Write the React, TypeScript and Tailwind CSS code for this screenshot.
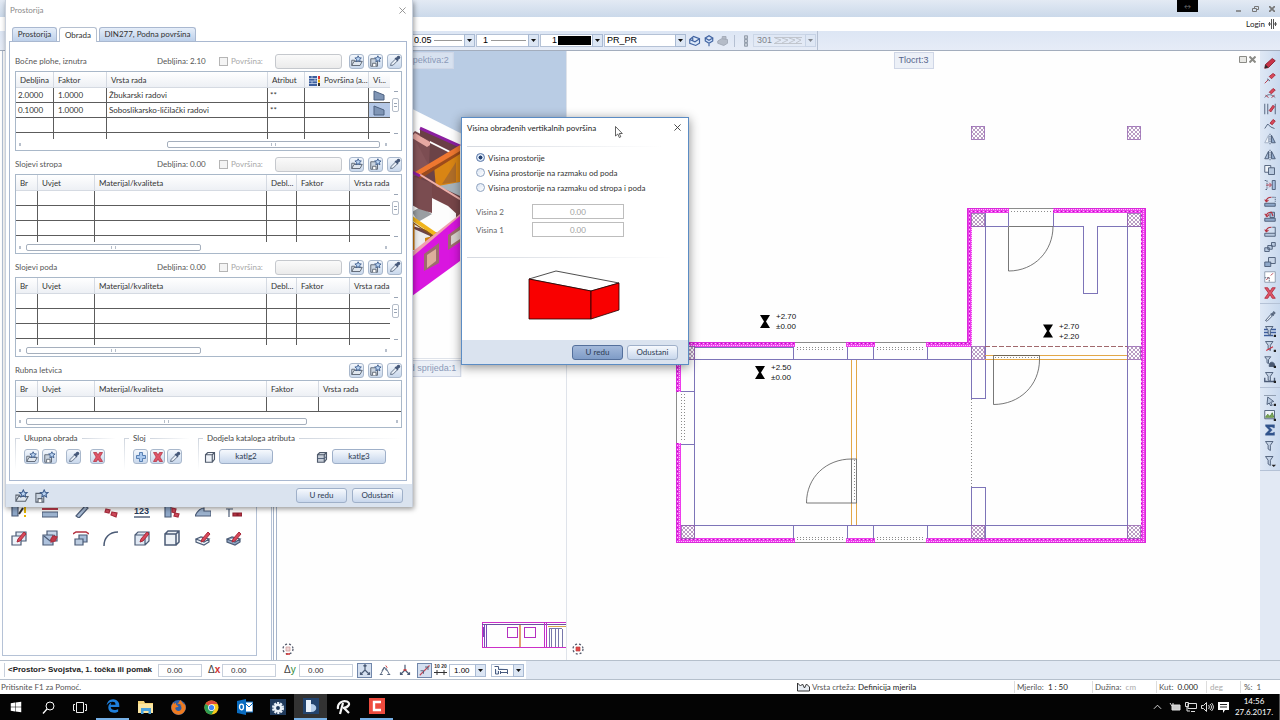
import React from "react";
import { FaWindows, FaFirefoxBrowser } from "react-icons/fa";
import { FaEdgeLegacy } from "react-icons/fa6";

/* ---------- small drawings ---------- */

type IconProps = { className?: string };

const Svg = ({ className = "size-3", children }: { className?: string; children: React.ReactNode }) => (
  <svg viewBox="0 0 16 16" className={className} fill="none" stroke="#4b5b76" strokeWidth="1.2" aria-hidden="true">
    {children}
  </svg>
);

const FolderStar = ({ className }: IconProps) => (
  <Svg className={className}>
    <path d="M1 14V7h4l1 1.500M1 14l3-5.500h11L12 14Z" fill="#dfe6ee" stroke="#59626f" />
    <path d="m9.500 1 1.300 2.700 3 .3-2.200 2 .6 3-2.700-1.500L6.800 9l.6-3-2.200-2 3-.3Z" fill="#b9d3f2" stroke="#3d5c8c" />
  </Svg>
);

const SaveStar = ({ className }: IconProps) => (
  <Svg className={className}>
    <path d="M1 5h9v10H1Z" fill="#c9d3df" stroke="#59626f" />
    <path d="M3.500 15v-4H8v4" fill="#fff" stroke="#59626f" />
    <path d="m10.500 1 1.300 2.700 3 .3-2.200 2 .6 3-2.700-1.500L7.800 9l.6-3-2.200-2 3-.3Z" fill="#b9d3f2" stroke="#3d5c8c" />
  </Svg>
);

const Pipette = ({ className }: IconProps) => (
  <Svg className={className}>
    <path d="m2 14 1-3 6-6 2.500 2.500-6 6Z" fill="#e8eef6" stroke="#5a6a80" />
    <path d="m8 4 4 4M9.500 5 12 2c1-1 3 1 2 2l-3 2.500" fill="#46597a" stroke="#46597a" strokeWidth="1.600" />
  </Svg>
);

const RedX = ({ className }: IconProps) => (
  <Svg className={className}>
    <path d="M2 2h4l2 3.500L10 2h4l-3.500 6 3.500 6h-4l-2-3.500L6 14H2l3.500-6Z" fill="#e0566a" stroke="#b3303f" strokeWidth="1" />
  </Svg>
);

const Plus = ({ className }: IconProps) => (
  <Svg className={className}>
    <path d="M6 2h4v4h4v4h-4v4H6v-4H2V6h4Z" fill="#a9c8ee" stroke="#4d76ad" />
  </Svg>
);

const Cube = ({ className }: IconProps) => (
  <Svg className={className}>
    <path d="M2 5h9v10H2ZM2 5l3-3h9v9l-3 4M11 5l3-3" fill="#eef2f7" stroke="#4f5a6b" strokeWidth="1.500" />
  </Svg>
);

const CubeFilled = ({ className }: IconProps) => (
  <Svg className={className}>
    <path d="M2 5h9v10H2ZM2 5l3-3h9v9l-3 4M11 5l3-3" fill="#c5ccd6" stroke="#4f5a6b" strokeWidth="1.500" />
    <path d="M2 10h9l3-3" />
  </Svg>
);

const Close = ({ className = "size-2" }: IconProps) => (
  <svg viewBox="0 0 8 8" className={className} stroke="currentColor" fill="none" aria-hidden="true">
    <path d="M0.500 0.500l7 7M7.500 0.500l-7 7" />
  </svg>
);

const Shape = ({ className = "h-[11px] w-3" }: IconProps) => (
  <svg viewBox="0 0 12 11" className={className} aria-hidden="true">
    <path d="M1 1l10 4v5H1Z" fill="#7f95b5" stroke="#4d6180" />
  </svg>
);

const Pencil = () => <path d="M7 9l6-7 2 2-6 7-3 1Z" fill="#d9485a" stroke="#a82b3c" strokeWidth="1" />;

/* ---------- palette tools ---------- */

const paletteIcons: { name: string; draw: React.ReactNode }[] = [
  { name: "Promjena zida", draw: <><path d="M1 3h6v11H1Z" fill="#8fa8c9" /><path d="m8 12 4-6" stroke="#333" strokeWidth="2" /><path d="M14 5v6M14 13v2" stroke="#e6b400" strokeWidth="2" /></> },
  { name: "Slojevi", draw: <><path d="M0 7h16" stroke="#c03a4a" strokeWidth="2" /><path d="M0 10h16v5H0Z" fill="#9db3cf" /></> },
  { name: "Kosa linija", draw: <path d="m3 14 9-10 3 2-9 10Z" fill="#a8bbd4" /> },
  { name: "Brisanje", draw: <path d="M3 7l4 1-1 3-4-1ZM9 10l5 1-1 4-5-2Z" fill="#cf4a5b" stroke="#a82b3c" /> },
  { name: "Numeriranje", draw: <><text x="0" y="12" fontSize="9" fill="#2b3d5c" stroke="none" fontFamily="Liberation Sans, sans-serif" fontWeight="bold">123</text><path d="M0 15h16" stroke="#2b3d5c" /></> },
  { name: "Brisanje zida", draw: <><path d="M1 3h6v12H1Z" fill="#8fa8c9" /><path d="M8 6l4 1-1 4-3-1ZM11 11l4 1-1 3-4-1Z" fill="#cf4a5b" stroke="#a82b3c" /></> },
  { name: "Teren", draw: <path d="M0 14c3-6 6-8 9-8v3h7v5Z" fill="#9db3cf" /> },
  { name: "Ograda", draw: <><path d="M0 7h7M3 7v8" /><path d="M7 11h4v3H7ZM12 11h4v3h-4Z" fill="#b3303f" stroke="#8a2030" /></> },
  { name: "Uredi kopiju", draw: <><path d="M5 2h10v9H5Z" fill="#dfe8f3" /><path d="M1 6h9v9H1Z" fill="#eef3f9" /><Pencil /></> },
  { name: "Rastavi", draw: <><path d="M5 1h10v10H5Z" fill="#c9d7ea" /><path d="M1 5h10v10H1Z" fill="#aec2dd" /><path d="m2 6 6 5 5-6" /><path d="M9 9l2-3 4 1-2 4-4 1Z" fill="#c03a4a" stroke="#b3303f" /></> },
  { name: "Pomakni", draw: <><path d="M0 4l3-2h10l3 2" stroke="#b3303f" strokeWidth="1.500" /><path d="M6 5h8v7H6Z" fill="#a9bdd8" /><path d="M2 9h8v6H2Z" fill="#bccce0" /></> },
  { name: "Zaobli", draw: <path d="M1 16C1 8 6 2 15 2" strokeWidth="1.500" /> },
  { name: "Uredi tijelo", draw: <><path d="M1 5h10v10H1ZM1 5l3-3h11v9l-4 4M11 5l4-3" fill="#dfe8f3" /><Pencil /></> },
  { name: "Tijelo", draw: <path d="M1 4h11v11H1ZM1 4l3-3h11v11l-3 3M12 4l3-3" fill="#eef2f7" strokeWidth="1.500" /> },
  { name: "Uredi plohu", draw: <><path d="m1 9 5-2 8 2-5 3ZM1 9v3l8 3 5-3V9" fill="#eef3f9" /><Pencil /></> },
  { name: "Uredi otvor", draw: <><path d="m1 9 5-2 8 2-5 3ZM1 9v3l8 3 5-3V9" fill="#93a9c6" /><Pencil /></> },
];

/* ---------- right-hand tool strip ---------- */

const Funnel = () => <path d="M2 2h10L8.500 7v7l-3-2V7Z" fill="#c5d3e6" />;
const Corner = () => <path d="M13 13h3v3h-3Z" fill="#222" stroke="none" />;

const sideGroups: { name: string; draw: React.ReactNode }[][] = [
  [
    { name: "Olovka", draw: <><path d="M2 10 11 2l4 3-9 9-5 1Z" fill="#c93448" stroke="#8c2030" /><path d="m1 15 1-5 4 4Z" fill="#2b2b2b" stroke="none" /></> },
    { name: "Dio linije", draw: <><path d="m1 15 5-5" stroke="#b3303f" /><path d="m7 6 5-4 3 2-5 5Z" fill="#d9485a" stroke="#a82b3c" /><path d="M4 9l4 3" /></> },
    { name: "Luk", draw: <><path d="M1 14c3-5 9-5 14 0" stroke="#5a6a80" /><path d="m7 7 5-5 3 2-5 5Z" fill="#d9485a" stroke="#a82b3c" /><path d="M2 11l4 3M10 14l4-3" stroke="#b3303f" /></> },
    { name: "Između linija", draw: <><path d="M1 1v14M5 1v14M15 1v14" /><path d="m7 10 5-7 2 2-5 7Z" fill="#d9485a" stroke="#a82b3c" /></> },
    { name: "Polilinija", draw: <><path d="m1 14 4-6 4 4 5 2" /><path d="m8 7 4-5 3 2-4 5Z" fill="#d9485a" stroke="#a82b3c" /></> },
    { name: "Zrcali kopiju", draw: <><path d="M6 3v10H1Z" fill="#eef3f9" stroke="#a0aec2" /><path d="M8 1v14" strokeDasharray="2 1" /><path d="M10 3v10h5Z" fill="#8fa8c9" /></> },
    { name: "Zrcali", draw: <><path d="M6 3v10H1Z" fill="#a9bdd8" /><path d="M8 1v14" strokeDasharray="2 1" /><path d="M10 3v10h5Z" fill="#8fa8c9" /></> },
    { name: "Kopiraj", draw: <><path d="M1 2h8v9H1Z" fill="#eef3f9" /><path d="M6 5h8v9H6Z" fill="#b8c9df" /></> },
    { name: "Pomak", draw: <><path d="M1 2h3v12H1" strokeDasharray="2 1" /><path d="M3 8h6M7 5l3 3-3 3" stroke="#b3303f" /><path d="M11 2h4v12h-4Z" fill="#a9c0e0" /></> },
    { name: "Rotiraj", draw: <><path d="M1 11h14v4H1Z" fill="#8fa8c9" /><path d="M3 9c0-4 3-6 7-6M1 6l2 3 3-2" stroke="#b3303f" strokeWidth="1.500" /><path d="M11 3h4v6" strokeDasharray="2 1" /></> },
    { name: "Rotiraj kopiju", draw: <><path d="M1 11h14v4H1Z" fill="#8fa8c9" /><path d="M8 3h6v7H8Z" fill="#a9bdd8" /><path d="M3 9c0-4 3-6 7-6l2 5M1 5l3 4 3-3" stroke="#b3303f" strokeWidth="1.500" /></> },
    { name: "Zakreni", draw: <><path d="M1 11h14v4H1Z" fill="#b8c9df" /><path d="M3 9c0-4 3-6 7-6M1 6l2 3 3-2" stroke="#b3303f" strokeWidth="1.500" /><path d="M11 3h4v8" /></> },
    { name: "Niz", draw: <><path d="M1 9h6v5H1ZM5 6h6v5H5ZM10 2h5v5h-5Z" fill="#b8c9df" /></> },
    { name: "Umnoži", draw: <><path d="M6 2h9v8H6Z" fill="#c9d6e8" /><path d="M1 8h8v6H1Z" fill="#8fa8c9" /></> },
    { name: "Skaliraj", draw: <><path d="M1 1h14v14H1Z" fill="#fff" stroke="#8b98ab" /><path d="m3 12 4-4M9 6l3-3" stroke="#b3303f" /><path d="M1 9h6v6" strokeDasharray="2 1" /></> },
    { name: "Obriši", draw: <path d="M1 1h4l3 5 3-5h4l-5 7 5 7h-4l-3-5-3 5H1l5-7Z" fill="#e0566a" stroke="#b3303f" /> },
  ],
  [
    { name: "Preuzmi", draw: <><path d="m2 14 7-8 2 2-7 7Z" fill="#e8eef6" /><path d="m9 4 4 4M10 6l3-4 2 2-3 3Z" fill="#6a7688" /></> },
    { name: "Filtar sloja", draw: <><path d="M0 6h16M0 10h16M0 14h12" stroke="#3c5c9c" strokeWidth="2" /><Funnel /><Corner /></> },
    { name: "Filtar linije", draw: <><Funnel /><path d="m3 14 9-5" stroke="#d0303f" strokeWidth="1.500" /><Corner /></> },
    { name: "Filtar traženja", draw: <><path d="M1 1h8L6 5v5L4 9V5Z" fill="#c5d3e6" /><path d="M7 12c0-5 7-5 7 0v2H7Z" fill="#4a5870" /><Corner /></> },
    { name: "Filtar elemenata", draw: <><path d="M1 9v5h13V9" strokeWidth="1.800" /><Funnel /><Corner /></> },
  ],
  [
    { name: "Odabir", draw: <><path d="M0 2h16" stroke="#8b98ab" /><path d="m5 4 8 6-4 1 2 4-2 1-2-4-3 2Z" fill="#b8c9df" /><Corner /></> },
    { name: "Slika", draw: <><path d="M1 2h13v11H1Z" fill="#eef3f9" /><path d="m2 11 3-4 3 3 3-5 2 6Z" fill="#7fae5a" stroke="#5b8540" /><Corner /></> },
    { name: "Zbroj", draw: <path d="M2 1h12v4h-2l-1-1H7l4 4-4 4h5l1-1h1v4H2v-2l5-5-5-5Z" fill="#31548c" stroke="#31548c" strokeWidth="0.500" /> },
    { name: "Filtar", draw: <Funnel /> },
    { name: "Filtar korak", draw: <><Funnel /><path d="M10 13h6l-3 3Z" fill="#222" stroke="none" /></> },
  ],
];

/* ---------- controls ---------- */

const IconButton = ({ label, children }: { label: string; children: React.ReactNode }) => (
  <button
    type="button"
    aria-label={label}
    className="grid size-[15px] shrink-0 place-items-center rounded-[3px] border border-[#a9b8cc] bg-linear-to-b from-[#f3f7fc] to-[#c9d8ec]"
  >
    {children}
  </button>
);

const PushButton = ({ children, strong = false, className = "w-[51px]" }: { children: React.ReactNode; strong?: boolean; className?: string }) => (
  <button
    type="button"
    className={`h-[15px] rounded-[3px] border text-center leading-[13px] text-[#2c3a52] ${className} ${
      strong ? "border-[#54709c] bg-linear-to-b from-[#a3b9da] to-[#7f9cc7]" : "border-[#9fb0c9] bg-linear-to-b from-[#f6f9fd] to-[#c8d7ec]"
    }`}
  >
    {children}
  </button>
);

const Arrow = () => (
  <span className="pointer-events-none absolute inset-y-0 right-0 grid w-[11px] place-items-center border border-[#a9bad3] bg-[#dce6f4]">
    <svg viewBox="0 0 5 3" className="h-[3px] w-[5px]" aria-hidden="true">
      <path d="M0 0h5L2.500 3Z" fill="#111" />
    </svg>
  </span>
);

const Combo = ({ label, value, width, pad = "pl-1", muted = false, children }: { label: string; value: string; width: string; pad?: string; muted?: boolean; children?: React.ReactNode }) => (
  <span className={`relative block h-[13px] shrink-0 ${width} ${muted ? "opacity-45" : ""}`}>
    <select
      aria-label={label}
      disabled={muted}
      className={`block size-full appearance-none border border-[#b5c2d6] leading-[11px] text-black ${muted ? "bg-transparent" : "bg-white"} ${pad}`}
    >
      <option>{value}</option>
    </select>
    {children}
    <Arrow />
  </span>
);

/* ---------- data grids of the room dialog ---------- */

type Column = { title: string; width: string; icon?: boolean };

const layerColumns: Column[] = [
  { title: "Br", width: "w-[22px]" },
  { title: "Uvjet", width: "w-[57px]" },
  { title: "Materijal/kvaliteta", width: "w-[172px]" },
  { title: "Debl...", width: "w-[30px]" },
  { title: "Faktor", width: "w-[53px]" },
  { title: "Vrsta rada", width: "" },
];

const sideColumns: Column[] = [
  { title: "Debljina", width: "w-[38px]" },
  { title: "Faktor", width: "w-[53px]" },
  { title: "Vrsta rada", width: "w-[161px]" },
  { title: "Atribut", width: "w-[37px]" },
  { title: "Površina (a...", width: "w-[64px]", icon: true },
  { title: "Vi...", width: "" },
];

const skirtingColumns: Column[] = [
  { title: "Br", width: "w-[22px]" },
  { title: "Uvjet", width: "w-[57px]" },
  { title: "Materijal/kvaliteta", width: "w-[172px]" },
  { title: "Faktor", width: "w-[52px]" },
  { title: "Vrsta rada", width: "" },
];

const shape = <Shape />;
const sideRows: React.ReactNode[][] = [
  ["2.0000", "1.0000", "Žbukarski radovi", "**", "", shape],
  ["0.1000", "1.0000", "Soboslikarsko-ličilački radovi", "**", "", shape],
  [],
];

const DataGrid = ({ label, columns, rows, thumb, vertical = true, selectedRow = -1 }: { label: string; columns: Column[]; rows: React.ReactNode[][]; thumb: string; vertical?: boolean; selectedRow?: number }) => (
  <div className="border border-[#a9b8c9] bg-white">
    <div className="flex">
      <table aria-label={label} className="min-w-0 flex-1 table-fixed border-separate border-spacing-0 text-[#333]">
        <colgroup>
          {columns.map((c) => (
            <col key={c.title} className={c.width} />
          ))}
        </colgroup>
        <thead>
          <tr className="h-4 bg-linear-to-b from-white to-[#eceff4]">
            {columns.map((c) => (
              <th key={c.title} className="overflow-hidden border-r border-b border-[#d5dae2] p-0 pt-[2px] pl-1 text-left leading-[13px] font-normal whitespace-nowrap last:border-r-0">
                {c.icon && (
                  <svg viewBox="0 0 12 10" className="mr-[3px] inline-block h-[10px] w-3" aria-hidden="true">
                    <path d="M0 0h8v10H0Z" fill="#3d5f9e" />
                    <path d="M0 2.500h8M0 5h8M0 7.500h8M3 0v2.500M6 2.500V5M3 5v2.500" stroke="#dce6f4" strokeWidth="0.700" />
                    <path d="M9 0h2v3H9Z" fill="#d33" />
                    <path d="M9 3.500h2v3H9Z" fill="#e6a800" />
                    <path d="M9 7h2v3H9Z" fill="#333" />
                  </svg>
                )}
                {c.title}
              </th>
            ))}
          </tr>
        </thead>
        <tbody>
          {rows.map((r, i) => (
            <tr key={i} className="h-[15px]">
              {columns.map((c, j) => (
                <td
                  key={c.title}
                  className={`overflow-hidden border-r border-b border-[#5c5c5c] p-0 pt-px leading-[13px] whitespace-nowrap last:border-r-0 ${j === 1 || j === columns.length - 1 ? "pl-1" : "pl-[2px]"} ${
                    i === selectedRow && j === columns.length - 1 ? "bg-[#b5c8e6]" : ""
                  }`}
                >
                  {r[j]}
                </td>
              ))}
            </tr>
          ))}
          {vertical && (
            <tr className="h-[6px]">
              {columns.map((c) => (
                <td key={c.title} className="border-r border-[#5c5c5c] p-0 last:border-r-0" />
              ))}
            </tr>
          )}
        </tbody>
      </table>
      {vertical && (
        <div className="flex w-[11px] flex-col items-center pt-[19px] text-[#9aa5b5]">
          <span className="h-px w-1 bg-[#9aa5b5]" />
          <span className="mt-[6px] grid h-[14px] w-[7px] place-items-center rounded-[2px] border border-[#b5bdc9] bg-white">
            <span className="h-1 w-[3px] border-y border-[#9aa5b5]" />
          </span>
          <span className="mt-auto mb-[5px] h-px w-1 bg-[#9aa5b5]" />
        </div>
      )}
    </div>
    <div className={`flex h-[11px] items-center justify-between px-[3px] ${vertical ? "" : "mt-1"}`}>
      <span className="h-[3px] w-[2px] bg-[#b8c0cc]" />
      <span className="mx-[5px] block flex-1">
        <span className={`grid h-[7px] place-items-center rounded-[2px] border border-[#a5afbd] bg-white ${thumb}`}>
          <span className="h-[3px] w-[5px] border-x border-[#b5bdc9]" />
        </span>
      </span>
      <span className={`h-[3px] w-[2px] bg-[#b8c0cc] ${vertical ? "mr-[11px]" : ""}`} />
    </div>
  </div>
);

const SectionHeader = ({ id, title, thickness }: { id: string; title: string; thickness?: string }) => (
  <div className="flex h-5 items-center text-[#555]">
    <span className="w-[142px]">{title}</span>
    {thickness && (
      <>
        <span className="w-[62px]">Debljina: {thickness}</span>
        <input id={id} type="checkbox" disabled className="size-[9px] appearance-none border border-[#b5b5b5] bg-[#f4f4f4]" />
        <label htmlFor={id} className="ml-[3px] text-[#a8a8a8]">
          Površina:
        </label>
        <input aria-label={`Površina, ${title}`} disabled className="ml-auto h-[15px] w-[67px] rounded-[3px] border border-[#c5c8cd] bg-linear-to-b from-[#fafafa] to-[#ebebeb]" />
      </>
    )}
    <span className={`flex gap-1 ${thickness ? "ml-[7px]" : "ml-auto"}`}>
      <IconButton label={`Učitaj, ${title}`}>
        <FolderStar />
      </IconButton>
      <IconButton label={`Spremi, ${title}`}>
        <SaveStar />
      </IconButton>
      <IconButton label={`Preuzmi, ${title}`}>
        <Pipette />
      </IconButton>
    </span>
  </div>
);

const Group = ({ title, className, children }: { title: string; className: string; children: React.ReactNode }) => (
  <div role="group" aria-label={title} className={`flex ${className}`}>
    <span className="mt-[5px] h-8 w-px shrink-0 bg-linear-to-b from-[#cfd5de] to-transparent" />
    <div className="min-w-0 flex-1">
      <div className="flex h-[11px] items-center gap-1 leading-[11px] text-[#444]">
        <span className="h-px w-[4px] bg-[#cfd5de]" />
        {title}
        <span className="h-px flex-1 bg-linear-to-r from-[#cfd5de] to-transparent" />
      </div>
      <div className="mt-[5px] flex items-center">{children}</div>
    </div>
  </div>
);

const RoomDialog = () => (
  <section aria-label="Prostorija" className="absolute top-0 left-[5px] z-20 flex w-[408px] flex-col border-x border-[#c8d0dc] bg-white shadow-[1px_2px_5px_rgba(0,0,0,0.4)]">
    <header className="flex h-[27px] items-start justify-between px-1 pt-[5px] pr-[6px] leading-[11px] text-[#8a8a8a]">
      <span>Prostorija</span>
      <button type="button" aria-label="Zatvori" className="mt-[2px] text-[#8a8a8a]">
        <Close className="size-[7px]" />
      </button>
    </header>
    <div role="tablist" className="flex h-[14px] items-end gap-[2px] pl-[6px] leading-[13px] text-[#333]">
      <button type="button" role="tab" aria-selected="false" className="w-[45px] rounded-t-[3px] border border-b-0 border-[#a9b8d0] bg-linear-to-b from-[#e6eef9] to-[#bdd0ea]">
        Prostorija
      </button>
      <button type="button" role="tab" aria-selected="true" className="relative z-10 -mb-px h-[15px] w-[38px] rounded-t-[3px] border border-b-0 border-[#b5c0d0] bg-white">
        Obrada
      </button>
      <button type="button" role="tab" aria-selected="false" className="w-[97px] rounded-t-[3px] border border-b-0 border-[#a9b8d0] bg-linear-to-b from-[#e6eef9] to-[#bdd0ea]">
        DIN277, Podna površina
      </button>
    </div>
    <div role="tabpanel" className="mr-[5px] ml-[3px] flex flex-col gap-[3px] border border-[#a9b8d0] pt-[9px] pr-1 pb-[10px] pl-[5px]">
      <div>
        <SectionHeader id="side-area" title="Bočne plohe, iznutra" thickness="2.10" />
        <DataGrid label="Bočne plohe" columns={sideColumns} rows={sideRows} thumb="ml-auto w-[213px]" selectedRow={1} />
      </div>
      <div>
        <SectionHeader id="ceiling-area" title="Slojevi stropa" thickness="0.00" />
        <DataGrid label="Slojevi stropa" columns={layerColumns} rows={[[], [], []]} thumb="w-[175px]" />
      </div>
      <div>
        <SectionHeader id="floor-area" title="Slojevi poda" thickness="0.00" />
        <DataGrid label="Slojevi poda" columns={layerColumns} rows={[[], [], []]} thumb="w-[175px]" />
      </div>
      <div>
        <SectionHeader id="skirting-area" title="Rubna letvica" />
        <DataGrid label="Rubna letvica" columns={skirtingColumns} rows={[[]]} thumb="w-[281px]" vertical={false} />
      </div>
      <div className="mt-[2px] flex gap-2">
        <Group title="Ukupna obrada" className="w-[101px]">
          <span className="ml-2 flex gap-[3px]">
            <IconButton label="Učitaj obradu"><FolderStar /></IconButton>
            <IconButton label="Spremi obradu"><SaveStar /></IconButton>
          </span>
          <span className="ml-[9px] flex gap-[9px]">
            <IconButton label="Preuzmi obradu"><Pipette /></IconButton>
            <IconButton label="Obriši obradu"><RedX /></IconButton>
          </span>
        </Group>
        <Group title="Sloj" className="w-[66px]">
          <span className="ml-2 flex gap-[2px]">
            <IconButton label="Dodaj sloj"><Plus /></IconButton>
            <IconButton label="Obriši sloj"><RedX /></IconButton>
            <IconButton label="Preuzmi sloj"><Pipette /></IconButton>
          </span>
        </Group>
        <Group title="Dodjela kataloga atributa" className="flex-1">
          <Cube className="ml-[5px] size-3" />
          <span className="ml-[3px]"><PushButton className="w-[54px]">katlg2</PushButton></span>
          <CubeFilled className="ml-auto size-3" />
          <span className="mr-4 ml-1"><PushButton className="w-[54px]">katlg3</PushButton></span>
        </Group>
      </div>
    </div>
    <footer className="mt-[3px] flex h-[23px] items-center gap-[5px] bg-[#dae3ef] px-[9px]">
      <button type="button" aria-label="Otvori favorit" className="mr-px"><FolderStar className="size-[14px]" /></button>
      <button type="button" aria-label="Spremi favorit" className="mr-auto"><SaveStar className="size-[14px]" /></button>
      <PushButton>U redu</PushButton>
      <PushButton>Odustani</PushButton>
    </footer>
  </section>
);

const heightModes = ["Visina prostorije", "Visina prostorije na razmaku od poda", "Visina prostorije na razmaku od stropa i poda"];

const HeightDialog = () => (
  <section aria-label="Visina obrađenih vertikalnih površina" className="absolute top-[117px] left-[461px] z-30 flex w-[228px] flex-col border border-[#5b8cc4] bg-white shadow-[0_2px_10px_rgba(0,0,0,0.45)]">
    <header className="flex h-[28px] items-start justify-between pt-1 pr-[7px] pl-[5px] leading-[12px] text-[#222]">
      <span>Visina obrađenih vertikalnih površina</span>
      <button type="button" aria-label="Zatvori" className="mt-[2px] text-[#333]">
        <Close className="size-[7px]" />
      </button>
    </header>
    <div className="ml-[5px] h-px w-[195px] bg-linear-to-r from-[#d5d9e0] to-transparent" />
    <fieldset className="pt-[3px] pl-[14px] text-[#333]">
      {heightModes.map((mode, i) => (
        <label key={mode} className="flex h-[15px] items-center gap-[3px]">
          <input
            type="radio"
            name="height-mode"
            defaultChecked={i === 0}
            className="size-[9px] appearance-none rounded-full border border-[#8fa3c0] bg-linear-to-br from-[#dbe5f3] to-white checked:border-[#5674a6] checked:bg-radial checked:from-[#24406e] checked:from-35% checked:to-[#dbe7f6] checked:to-45%"
          />
          {mode}
        </label>
      ))}
    </fieldset>
    <div className="mt-[9px] flex flex-col gap-[3px] pl-[14px] text-[#666]">
      {["Visina 2", "Visina 1"].map((name) => (
        <label key={name} className="flex h-[15px] items-center">
          <span className="w-14">{name}</span>
          <input disabled defaultValue="0.00" className="h-[15px] w-[92px] border border-[#bdbdbd] bg-white text-center text-[#a0a0a0]" />
        </label>
      ))}
    </div>
    <div className="mt-5 ml-[5px] h-px w-[205px] bg-linear-to-r from-[#d5d9e0] to-transparent" />
    <svg viewBox="0 0 94 51" className="mt-3 ml-[66px] h-[51px] w-[94px]" aria-hidden="true">
      <path d="M1 9 28 1l63 12-28 8Z" fill="#fff" stroke="#222" strokeWidth="0.800" />
      <path d="M1 9l62 12v28H1Z" fill="#f90000" stroke="#200" strokeWidth="0.800" />
      <path d="M63 21l28-8v27l-28 9Z" fill="#f90000" stroke="#200" strokeWidth="0.800" />
    </svg>
    <footer className="mt-[19px] flex h-6 items-center justify-end gap-1 bg-[#dae3ef] pr-[10px]">
      <PushButton strong>U redu</PushButton>
      <PushButton>Odustani</PushButton>
    </footer>
  </section>
);

/* ---------- drawings ---------- */

const PerspectiveDrawing = () => (
  <svg viewBox="278 51 289 307" preserveAspectRatio="xMinYMin slice" className="block size-full" aria-hidden="true">
    <path d="M278 41 567 186v172H278Z" fill="#fefefe" />
    <path d="M413 134 461 158v90l-48 40Z" fill="#6b4347" />
    <path d="M413 134l17 10v22l-17 12Z" fill="#845459" />
    <path d="M413 134l3-3 15 8v5l-1 22Z" fill="#7c4d52" />
    <path d="M413 136l3-3 15 9v3l-3 2-15-9Z" fill="#e6a8a2" />
    <path d="M421 129l40 17v10l-40-20Z" fill="#6a3f45" />
    <path d="M421 128l40 18" stroke="#8b1fa0" strokeWidth="3" />
    <path d="M435 166l26-16v32l-24 6Z" fill="#d98514" />
    <path d="M443 184l14-22v20Z" fill="#b06e28" />
    <path d="M416 172l45-27v6l-42 25Z" fill="#ee7730" />
    <path d="M419 176l42-25v3l-40 25Z" fill="#9c4a1c" />
    <path d="M461 182v14l-22-10Z" fill="#a8b4bc" />
    <path d="M413 206l20-10 24 10v14l-14 14-30-8Z" fill="#fdfdfd" />
    <path d="M413 212l8-5 12 7-14 8Z" fill="#9a9ea2" />
    <path d="M413 176l20 7v30l-13-4-7-4Z" fill="#7a4c50" />
    <path d="M420 176l41 24v17l-12-11-16-8v-16Z" fill="#774649" />
    <path d="M420 174l41 25" stroke="#eeb0aa" strokeWidth="2" />
    <path d="M413 172l8 4" stroke="#8b1fa0" strokeWidth="3" />
    <path d="M413 228l18 8v18l-18 10Z" fill="#ededed" />
    <path d="M426 238l12-3v20l-12 5Z" fill="#cf8410" />
    <path d="M413 218l26 18" stroke="#f0b41c" strokeWidth="4" />
    <path d="M413 222l24 16" stroke="#8d5410" />
    <path d="M414 224v26M433 238v18" stroke="#cf7a10" strokeWidth="3" />
    <path d="M413 252l48-38v4l-48 40Z" fill="#f0a0b0" />
    <path d="M413 257l48-41v45l-48 35Z" fill="#d916df" />
    <path d="M425 254l15-11v20l-15 8Z" fill="#9c6d6c" />
    <path d="M428 255l9-6v12l-9 7Z" fill="#dcae9c" />
    <path d="M449 235l12-9v16l-12 8Z" fill="#9c6d6c" />
    <path d="M452 236l9-6v9l-9 6Z" fill="#d8d2ce" />
  </svg>
);

const CrossMark = ({ filled = false }: { filled?: boolean }) => (
  <svg viewBox="0 0 12 12" className="absolute bottom-[5px] left-[5px] size-3" aria-hidden="true">
    <circle cx="6" cy="6" r="5" fill="none" stroke="#555b6c" strokeWidth="1.300" strokeDasharray="2 2" />
    <path d="M4 4h4v4H4Z" fill={filled ? "#e04848" : "#efd5d5"} stroke={filled ? "#c04040" : "#cc9a9a"} strokeWidth="0.700" />
    {!filled && <path d="M4 11h4" stroke="#d03030" strokeWidth="1.500" />}
  </svg>
);

const columns: [number, number][] = [
  [971, 126],
  [1127, 126],
  [971, 213],
  [1127, 213],
  [681, 346],
  [971, 346],
  [1127, 346],
  [681, 525],
  [971, 525],
  [1127, 525],
];

const Hourglass = ({ x, y }: { x: number; y: number }) => <path d={`M${x - 5} ${y - 6.5}h10l-4 6.500 4 6.500h-10l4-6.500Z`} fill="#000" />;

const Plan = () => (
  <svg viewBox="567 51 693 609" preserveAspectRatio="xMinYMin slice" className="block size-full" fontFamily="Liberation Sans, Arial, sans-serif" role="img" aria-label="Tlocrt">
    <defs>
      <pattern id="wall" width="4" height="4" patternUnits="userSpaceOnUse">
        <path d="M0 0h4v4H0Z" fill="#ee3cec" />
        <path d="M1 1h1v1H1ZM3 3h1v1H3ZM3 1h1v1h-1Z" fill="#fbc8fb" />
        <path d="M1 3h1v1H1Z" fill="#b81cc0" />
      </pattern>
      <pattern id="hatch" width="4" height="4" patternUnits="userSpaceOnUse">
        <path d="M0 0l4 4M4 0 0 4" stroke="#8a5a9a" strokeWidth="0.600" />
      </pattern>
    </defs>
    <g fill="url(#wall)">
      <path d="M676 342h119v5H681v45h-5ZM846 342h29v5h-29ZM926 342h41V208h42v5h-37v134h-46ZM1053 208h93v335H926v-5h215V213h-88ZM676 443h5v95h114v5H676ZM846 538h29v5h-29Z" />
    </g>
    <g fill="none" stroke="#d92ad9" strokeWidth="1">
      <path d="M795 342.500H676.500V392M846 342.500h29M926 342.500h41.500V208.500h41.500M1053 208.500h92.500v334M1146 542.500H926M875 542.500h-29M795 542.500H676.500V443" />
    </g>
    <g fill="none" stroke="#7d74b8" strokeWidth="1" shapeRendering="crispEdges">
      <path d="M681 359.500h291M694.500 346v193M681 525.500h447M793.500 347v12M847.500 347v12M873.500 347v12M927.500 347v12M793.500 525v14M847.500 525v14M873.500 525v14M927.500 525v14M681 391.500h13M681 444.500h13" />
      <path d="M971.500 346v52.500h13.500V346M971.500 525v-37.500H985V539M985.500 213v133M1127.500 213v326M972 226.500h36M1053 226.500h30.500v66.500h13.500v-66.500h44M1008.500 213v13M1053.500 213v13M694 347.500h99" />
    </g>
    <g fill="none" stroke="#8b8b8b" strokeWidth="1" shapeRendering="crispEdges">
      <path d="M795 342.500h51M875 342.500h51M795 542.500h51M875 542.500h51M676.500 392v51M1009 208.500h44" />
      <path strokeDasharray="1 2" d="M797 347.500h48M797 349.500h48M877 347.500h48M877 349.500h48M797 537.500h48M797 539.500h48M877 537.500h48M877 539.500h48M681.500 394v48M684.500 394v48M1011 211.500h40M971.500 399v88M995 357.500h43M854.500 460v42" />
    </g>
    <g fill="none" stroke="#e2a748" strokeWidth="1" shapeRendering="crispEdges">
      <path d="M851.500 360v99M856.500 360v99M851.500 503v22M856.500 503v22M985 355.500h142M985 359.500h142" />
    </g>
    <path d="M985 346.500h142" stroke="#a0686c" strokeDasharray="5 2" />
    <g fill="none" stroke="#555" strokeWidth="0.800">
      <path d="M851.500 459v44h-45c0-26 20-44 45-44h5v44h-5M1008.500 226.500v44.500c26 0 44.500-20 44.500-44.500ZM993.500 355.500v49c26 0 46-19 46-45v-4Z" />
    </g>
    {columns.map(([x, y]) => (
      <rect key={`${x}-${y}`} x={x + 0.5} y={y + 0.5} width="13" height="13" fill="url(#hatch)" stroke="#9465b0" strokeWidth="0.800" />
    ))}
    <Hourglass x={765} y={321.5} />
    <Hourglass x={760} y={372.5} />
    <Hourglass x={1048} y={331} />
    <g fontSize="8" fill="#111">
      <text x="776" y="319">+2.70</text>
      <text x="776" y="329">±0.00</text>
      <text x="771" y="370">+2.50</text>
      <text x="771" y="380">±0.00</text>
      <text x="1059" y="329">+2.70</text>
      <text x="1059" y="339">+2.20</text>
    </g>
  </svg>
);

const Elevation = () => (
  <svg viewBox="0 0 84 26" className="absolute right-0 bottom-3 h-[26px] w-[84px]" fill="none" aria-hidden="true" shapeRendering="crispEdges">
    <path d="M84 .5H.5v24.500H84" stroke="#cc2fc8" />
    <path d="M0 2.500h84" stroke="#6a50a0" />
    <path d="M2.500 3v22M1.500 5v10M4.500 3v22" stroke="#7d4ab8" />
    <path d="M25.500 5.500h10v10h-10ZM42.500 5.500h11v10h-11Z" stroke="#b52fc0" />
    <path d="M38 2.500v22" stroke="#e0a070" strokeWidth="2" />
    <path d="M62.500 0v25M64.500 0v25" stroke="#c02fc8" />
    <path d="M66 4.500h18" stroke="#d8a850" />
    <path d="M67.500 7v18M69.500 7v18M73.500 7v18M76.500 7v18M80.500 7v18M67 6.500h13" stroke="#7777aa" />
  </svg>
);

const ViewLabel = ({ children }: { children: React.ReactNode }) => (
  <span className="absolute top-px left-1/2 z-10 -translate-x-1/2 border border-[#cfd6e6] bg-[#e4e9f4]/70 px-1 font-['Liberation_Sans',Arial,sans-serif] text-[9px] leading-[15px] whitespace-nowrap text-[#8a99b8]">{children}</span>
);

/* ---------- bars ---------- */

const Field = ({ label, className }: { label: string; className: string }) => (
  <input aria-label={label} defaultValue="0.00" className={`h-[13px] border border-[#c8d0dc] bg-white pl-2 text-[#333] ${className}`} />
);

const ModeButton = ({ label, active = false, children }: { label: string; active?: boolean; children: React.ReactNode }) => (
  <button type="button" aria-label={label} className={`grid size-[15px] place-items-center ${active ? "border border-[#7187ab] bg-[#d5e0f0]" : ""}`}>
    <Svg>{children}</Svg>
  </button>
);

const CommandBar = () => (
  <div className="flex h-5 shrink-0 items-center border-y border-[#b5bfcc] bg-[#e2e9f4] font-['Liberation_Sans',Arial,sans-serif] text-[8px] whitespace-nowrap">
    <div className="flex h-full items-center bg-white pr-[2px] pl-1">
      <span className="h-[14px] w-px bg-[#c8d0dc]" />
      <label htmlFor="offset" className="w-[153px] pl-[3px] font-bold text-[#222]">&lt;Prostor&gt; Svojstva, 1. točka ili pomak</label>
      <input id="offset" defaultValue="0.00" className="h-[13px] w-[44px] border border-[#c8d0dc] bg-white pl-2 text-[#333]" />
      <span className="ml-[6px] w-[14px] text-[10px] text-[#444]">Δ<b className="text-[#d03030]">x</b></span>
      <Field label="Δx" className="w-[54px]" />
      <span className="ml-2 w-[15px] text-[10px] text-[#444]">Δ<span className="text-[#2e8b3a]">y</span></span>
      <Field label="Δy" className="w-[54px]" />
      <div className="ml-1 flex gap-[5px]">
        <ModeButton label="Globalna točka" active><path d="M8 1v7M8 8l-6 6M8 8l6 6M6 3l2-2 2 2M2 11v3h3M14 11v3h-3" strokeWidth="1.600" /></ModeButton>
        <ModeButton label="Kut"><path d="M2 14l5-9M9 5l5 9M4 9l3-5 3 5M1 14h4M11 14h4" /><path d="M9 2l2 3" stroke="#d03030" /></ModeButton>
        <ModeButton label="Razmak"><path d="M8 1v7M8 8l-6 6M8 8l6 6M2 11v3h3M14 11v3h-3" strokeWidth="1.600" /><path d="M6 8h4" stroke="#d03030" strokeWidth="2" /></ModeButton>
        <ModeButton label="Lovljenje" active><path d="M1 15 14 2" stroke="#c04858" strokeWidth="1.500" /><path d="M2 9h4v4M8 4h4v4" /></ModeButton>
      </div>
      <span className="ml-[2px] flex flex-col items-center text-[5px] leading-[5px] font-bold text-[#333]">
        10 20
        <svg viewBox="0 0 13 7" className="h-[7px] w-[13px]" stroke="#333" fill="none" aria-hidden="true"><path d="M0 3.500h13M3 1v5M10 1v5" /></svg>
      </span>
      <span className="ml-[2px]"><Combo label="Korak" value="1.00" width="w-[37px]" /></span>
      <span className="ml-[5px]">
        <Combo label="Kotiranje" value="" width="w-[33px]">
          <svg viewBox="0 0 14 9" className="pointer-events-none absolute top-[2px] left-[3px] h-[9px] w-[14px]" fill="#dbe5f2" stroke="#4a5c80" aria-hidden="true"><path d="M.5.5h4v3h9M1.500 3v5h3V5M6.500 6.500h7M6.500 5v3M13.500 3.500V8" /></svg>
        </Combo>
      </span>
    </div>
  </div>
);

const StatusBar = () => (
  <div className="flex h-[14px] shrink-0 items-center bg-white text-[#555] whitespace-nowrap">
    <span className="flex-1 pl-px">Pritisnite F1 za Pomoć.</span>
    <svg viewBox="0 0 13 10" className="h-[10px] w-[13px]" fill="#e8edf3" stroke="#333" aria-hidden="true"><path d="M.5 9V1l3 3 2-2 2 4 2-4 3 3v4Z" /></svg>
    <span className="w-12 pl-[2px]">Vrsta crteža:</span>
    <span className="w-[156px] text-[#222]">Definicija mjerila</span>
    <span className="w-[78px] border-l border-[#ddd] pl-[2px]">Mjerilo:&nbsp; <span className="text-[#222]">1 : 50</span></span>
    <span className="w-[64px] border-l border-[#ddd] pl-[2px]">Dužina:&nbsp; <span className="text-[#aaa]">cm</span></span>
    <span className="w-[50px] border-l border-[#ddd] pl-[2px]">Kut:&nbsp; <span className="text-[#222]">0.000</span></span>
    <span className="w-[34px] border-l border-[#ddd] pl-[3px] text-[#aaa]">deg</span>
    <span className="w-10 border-l border-[#ddd] pl-[3px]">%:&nbsp; 1</span>
  </div>
);

const Task = ({ label, running = false, active = false, children }: { label: string; running?: boolean; active?: boolean; children: React.ReactNode }) => (
  <button type="button" aria-label={label} className={`grid h-full w-[33px] place-items-center ${active ? "bg-[#323232]" : ""} ${running ? "border-b-2 border-[#76b0e6]" : ""}`}>
    {children}
  </button>
);

const Taskbar = () => (
  <footer className="flex h-[26px] shrink-0 items-center bg-[#040404] text-white">
    <button type="button" aria-label="Start" className="grid w-8 place-items-center"><FaWindows className="size-3" /></button>
    <button type="button" aria-label="Traži" className="grid w-8 place-items-center">
      <svg viewBox="0 0 13 13" className="size-[13px]" fill="none" stroke="#fff" aria-hidden="true"><circle cx="8" cy="5" r="4" /><path d="m5 8-4 4.500" strokeWidth="1.300" /></svg>
    </button>
    <button type="button" aria-label="Prikaz zadataka" className="grid w-8 place-items-center">
      <svg viewBox="0 0 14 11" className="h-[11px] w-[14px]" fill="none" stroke="#eee" aria-hidden="true"><path d="M3.500.5h7v10h-7ZM2 2.500H.5v6H2M12 2.500h1.500v6H12" /></svg>
    </button>
    <Task label="Edge" running><FaEdgeLegacy className="size-[14px] text-[#1e7fdc]" /></Task>
    <Task label="Eksplorer">
      <svg viewBox="0 0 16 14" className="h-[14px] w-4" aria-hidden="true"><path d="M0 1h6l1 2h8v10H0Z" fill="#f5d478" /><path d="M0 4h15v9H0Z" fill="#fbe6a2" /><path d="M3 8h10v6h-2.500v-3h-5v3H3Z" fill="#4aa3df" /></svg>
    </Task>
    <Task label="Firefox">
      <span className="grid size-[15px] place-items-center rounded-full bg-[#2b5ea8]"><FaFirefoxBrowser className="size-[15px] text-[#ee7b20]" /></span>
    </Task>
    <Task label="Chrome">
      <svg viewBox="0 0 16 16" className="size-[15px]" aria-hidden="true"><circle cx="8" cy="8" r="7.500" fill="#f7c91b" /><path d="M8 8 1.500 4.250A7.500 7.500 0 0 1 14.500 4.250H8Z" fill="#de4a3a" /><path d="M8 8 1.500 4.250A7.500 7.500 0 0 0 8 15.500l3.200-5.600Z" fill="#2f9e55" /><circle cx="8" cy="8" r="3.600" fill="#fff" /><circle cx="8" cy="8" r="2.800" fill="#4285f4" /></svg>
    </Task>
    <Task label="Outlook">
      <svg viewBox="0 0 16 16" className="size-4" aria-hidden="true"><path d="M8 3h8v10H8Z" fill="#fff" stroke="#0a6cc0" /><path d="m9 5 3 3 4-4" fill="none" stroke="#0a6cc0" /><path d="M0 2l9-2v16l-9-2Z" fill="#0a6cc0" /><ellipse cx="4.500" cy="8" rx="2" ry="2.800" fill="none" stroke="#fff" strokeWidth="1.300" /></svg>
    </Task>
    <Task label="Postavke programa">
      <svg viewBox="0 0 16 16" className="size-4" aria-hidden="true"><path d="M0 0h16v16H0Z" fill="#1f3a5c" /><circle cx="8" cy="9" r="4.800" fill="none" stroke="#e8f0f8" strokeWidth="2.500" strokeDasharray="2 1.020" /><circle cx="8" cy="9" r="3.200" fill="none" stroke="#e8f0f8" strokeWidth="2.500" /></svg>
    </Task>
    <Task label="CAD" running active>
      <svg viewBox="0 0 16 16" className="size-4" aria-hidden="true"><path d="M0 0h16v16H0Z" fill="#23446e" /><path d="M3 2h5v12H3Z" fill="#e8f1fb" /><path d="M8 6c7 0 7 8 0 8Z" fill="#b4cdea" /></svg>
    </Task>
    <Task label="Rhino">
      <svg viewBox="0 0 16 16" className="size-4" fill="none" stroke="#f5f5f5" strokeWidth="2.200" aria-hidden="true"><path d="M2 10C1 4 7 1 11 2.500s2 6-4 6.500M7 4 4 15M8 9l5 5" /></svg>
    </Task>
    <Task label="Camtasia" running>
      <svg viewBox="0 0 16 16" className="size-4" aria-hidden="true"><path d="M0 0h16v16H0Z" fill="#ee4b3e" /><path d="M12 4H5v8h7" fill="none" stroke="#fff" strokeWidth="2.400" /></svg>
    </Task>
    <div className="ml-auto flex items-center gap-1">
      <svg viewBox="0 0 10 6" className="mr-[3px] h-[6px] w-[9px]" fill="none" stroke="#eee" aria-hidden="true"><path d="m1 5 4-4 4 4" /></svg>
      <svg viewBox="0 0 12 10" className="h-[10px] w-3" fill="#ccc" stroke="#ddd" aria-hidden="true"><path d="M3 3h8v5H3ZM1 1l2 3M4 1v2" /></svg>
      <svg viewBox="0 0 12 10" className="h-[10px] w-3" fill="none" stroke="#ddd" aria-hidden="true"><path d="M3 1.500h8.500v5H3ZM.5.5h3v4h-3ZM6 9.500h4M2 5v4h3" /></svg>
      <svg viewBox="0 0 13 10" className="h-[10px] w-[13px]" fill="none" stroke="#ddd" aria-hidden="true"><path d="M.5 3.500h2l3-3v9l-3-3h-2ZM7.500 3c1 1 1 3 0 4M9 2c2 2 2 4 0 6M10.500 1c2.500 3 2.500 5 0 8" /></svg>
      <svg viewBox="0 0 11 11" className="size-[11px]" aria-hidden="true"><path d="M0 0h11v8H7l-2 3V8H0Z" fill="#fff" /><path d="M2 2.500h7M2 5h7" stroke="#222" /></svg>
    </div>
    <div className="w-[50px] text-center leading-[11px]">
      <div>14:56</div>
      <div>27.6.2017.</div>
    </div>
    <span className="h-full w-px bg-[#555]" />
  </footer>
);

const AttributeBar = () => (
  <div className="flex h-5 shrink-0 items-center gap-px border-b border-[#a3adbd] bg-linear-to-b from-[#dde6f4] to-[#e6ecf7] pl-[384px] font-['Liberation_Sans',Arial,sans-serif] text-[9px]">
    <Combo label="Debljina linije" value="0.05" width="w-[91px]" pad="pl-[29px]">
      <span className="pointer-events-none absolute top-[6px] right-[13px] h-px w-[28px] bg-[#999]" />
    </Combo>
    <Combo label="Tip linije" value="1" width="w-[63px]" pad="pl-[6px]">
      <span className="pointer-events-none absolute top-[6px] right-[13px] h-px w-[35px] bg-[#999]" />
    </Combo>
    <Combo label="Boja linije" value="1" width="w-[63px]" pad="pl-[11px]">
      <span className="pointer-events-none absolute top-[2px] right-[12px] h-[9px] w-[33px] bg-black" />
    </Combo>
    <Combo label="Sloj" value="PR_PR" width="w-[82px]" pad="pl-[2px]" />
    <div className="ml-[2px] flex gap-[2px] border-r border-[#b5c0d2] pr-[5px]">
      <Svg><path d="M1 6l5-4 8 3v6l-5 3-8-3ZM1 6l7 3 6-4M5 7V4" fill="#dbe8fa" stroke="#3f62a0" strokeWidth="1.500" /></Svg>
      <Svg><path d="M3 4l5-3 5 3-5 3ZM3 4v4l5 3 5-3V4M8 11v4" fill="#cfe0fa" stroke="#3f62a0" strokeWidth="1.500" /></Svg>
      <Svg><path d="M1 8l5-3 8 1v5l-5 3-8-3ZM7 5V2h5v4" fill="#b5bcc8" stroke="#a0a8b5" /></Svg>
    </div>
    <Svg className="ml-1 size-3"><path d="M6 1h4v4H6ZM6 6h4v4H6ZM6 11h4v4H6Z" fill="#c5ccd6" stroke="#8d97a6" /></Svg>
    <Combo label="Uzorak" value="301" width="w-[63px]" pad="pl-[3px]" muted>
      <svg viewBox="0 0 28 7" className="pointer-events-none absolute top-[3px] left-[21px] h-[7px] w-[28px]" fill="none" stroke="#888" aria-hidden="true"><path d="M0 .5h28M0 6.500h28M1 1l6 2-6 3M8 1l6 2-6 3M15 1l6 2-6 3M22 1l5 2-5 3" strokeWidth="0.800" /></svg>
    </Combo>
    <span className="h-full w-px bg-[#b5c0d2]" />
  </div>
);

const SideTools = () => (
  <nav aria-label="Alati" className="flex w-5 shrink-0 flex-col bg-[#e2e9f4]">
    <div className="border-b border-[#b5c2d6] bg-linear-to-r from-[#dfe8f5] to-[#c9d9ee] pt-1 pb-[2px]">
      {sideGroups.map((tools, i) => (
        <div key={i} className={i === 0 ? "" : "mt-[3px] border-t border-[#b5c2d6] pt-[4px]"}>
          {tools.map((t, j) => (
            <button key={t.name} type="button" aria-label={t.name} className={`grid w-full place-items-center ${j % 3 === 2 ? "h-4" : "h-[15px]"}`}>
              <Svg className="size-3">{t.draw}</Svg>
            </button>
          ))}
        </div>
      ))}
    </div>
  </nav>
);

export default function App() {
  return (
    <div className="relative flex h-screen min-h-[560px] flex-col overflow-hidden bg-white font-[Lato,'Open_Sans',sans-serif] text-[8px] leading-[12px]">
      <div className="flex h-[17px] shrink-0 items-start justify-end bg-linear-to-b from-[#e3eaf4] to-[#cbd9ea] text-[#777]">
        <span className="mr-[38px] grid h-3 w-[21px] place-items-center bg-black text-[7px] leading-none text-[#777]">↔</span>
        <div className="flex h-full items-center gap-[10px] pr-[5px]">
          <button type="button" aria-label="Smanji"><svg viewBox="0 0 6 6" className="size-[6px]" aria-hidden="true"><path d="M0 5h5" stroke="#777" strokeWidth="1.500" /></svg></button>
          <button type="button" aria-label="Vrati"><svg viewBox="0 0 7 6" className="h-[6px] w-[7px]" fill="none" stroke="#777" aria-hidden="true"><path d="M.5 2.500h4v3h-4ZM2.500 2V.5h4v3H5" /></svg></button>
          <button type="button" aria-label="Zatvori program"><svg viewBox="0 0 6 6" className="size-[6px]" stroke="#777" strokeWidth="1.700" aria-hidden="true"><path d="m0 0 6 6M6 0 0 6" /></svg></button>
        </div>
      </div>
      <div className="flex h-[14px] shrink-0 items-center justify-end gap-[3px] bg-white pr-[3px] text-[#222]">
        <a href="#login">Login</a>
        <svg viewBox="0 0 9 10" className="h-[10px] w-[9px]" fill="none" stroke="#555" aria-hidden="true"><path d="M0 5h3M6 5h3M3.500 0v10M5.500 0v10M1.500 3v4M7.500 3v4" /></svg>
      </div>
      <AttributeBar />

      <main className="flex min-h-0 flex-1">
        <aside className="flex w-[277px] shrink-0 gap-[14px] border-r-4 border-double border-[#a5b4ca] bg-white pb-1 pl-[2px]">
          <div className="w-[255px] border border-t-0 border-[#b5c2d6] bg-white pt-[445px] pl-px">
            <div className="grid w-[245px] grid-cols-8">
              {paletteIcons.map((t) => (
                <button key={t.name} type="button" aria-label={t.name} className="grid h-7 place-items-center">
                  <Svg className="size-4">{t.draw}</Svg>
                </button>
              ))}
            </div>
          </div>
          <span className="-mb-1 w-px bg-[#b5c2d6]" />
        </aside>

        <div className="flex min-w-0 flex-1">
          <div className="flex w-[290px] shrink-0 flex-col border-r border-[#dfe3ea]">
            <div className="relative min-h-0 flex-[101] overflow-hidden bg-[#b9cce4]">
              <ViewLabel>Perspektiva:2</ViewLabel>
              <PerspectiveDrawing />
            </div>
            <div className="relative min-h-0 flex-[99] overflow-hidden border-t border-[#dfe3ea] bg-[#fefefe]">
              <ViewLabel>Pogled sprijeda:1</ViewLabel>
              <Elevation />
              <CrossMark />
            </div>
          </div>
          <div className="relative min-w-0 flex-1 overflow-hidden bg-[#fefefe]">
            <ViewLabel><span className="text-[#55658c]">Tlocrt:3</span></ViewLabel>
            <div className="absolute top-[5px] right-1 flex gap-[2px]">
              <button type="button" aria-label="Maksimiziraj prikaz"><svg viewBox="0 0 8 7" className="h-[7px] w-2" aria-hidden="true"><path d="M.5.5h7v6h-7Z" fill="#e8e8e4" stroke="#8b8b86" /></svg></button>
              <button type="button" aria-label="Zatvori prikaz"><svg viewBox="0 0 7 7" className="size-[7px]" stroke="#8b8b86" strokeWidth="2" aria-hidden="true"><path d="m.5.5 6 6M6.500.5l-6 6" /></svg></button>
            </div>
            <Plan />
            <CrossMark filled />
          </div>
        </div>
        <SideTools />
      </main>

      <CommandBar />
      <StatusBar />
      <Taskbar />

      <RoomDialog />
      <HeightDialog />
      <svg viewBox="0 0 8 12" className="pointer-events-none absolute top-[126px] left-[615px] z-40 h-3 w-2" aria-hidden="true">
        <path d="M.5.5v9.500l2.300-2 1.500 3.500 1.500-.7L4.300 7.500h3Z" fill="#fff" stroke="#222" strokeWidth="0.700" />
      </svg>
    </div>
  );
}
